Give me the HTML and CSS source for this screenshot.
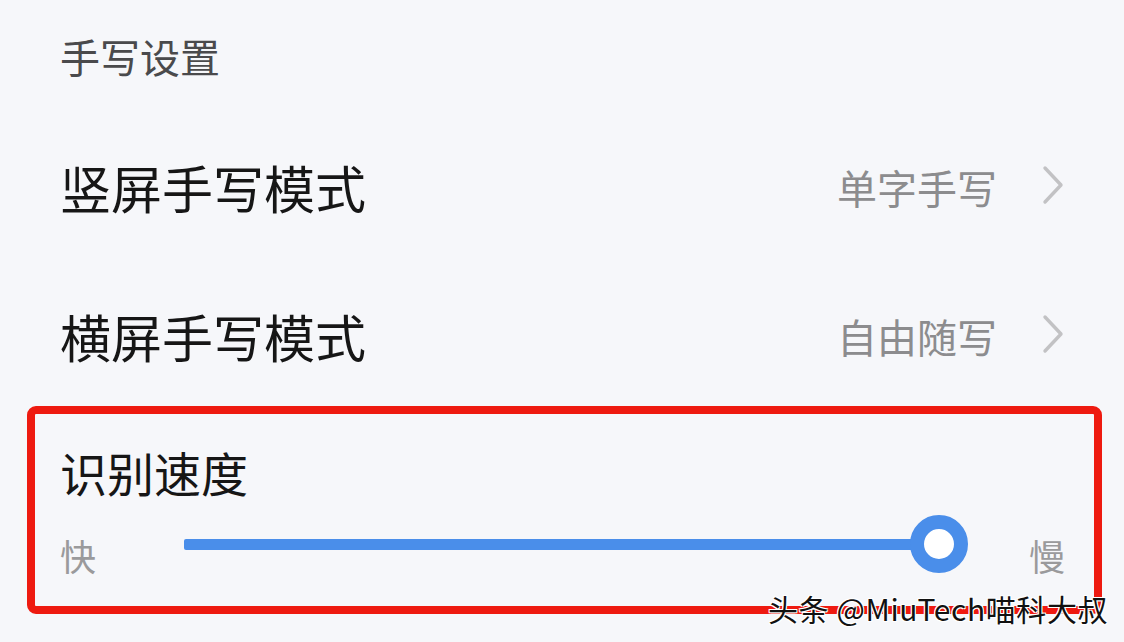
FILE: index.html
```html
<!DOCTYPE html>
<html lang="zh-CN">
<head>
<meta charset="utf-8">
<title>手写设置</title>
<link rel="stylesheet" href="styles.css">
</head>
<body>
<div class="page">
  <div class="section-title">手写设置</div>
  <div class="row row-first">
    <div class="row-label">竖屏手写模式</div>
    <div class="row-value">单字手写</div>
    <svg class="chevron" width="24" height="42" viewBox="0 0 24 42"><polyline points="4,4 20,21 4,38" fill="none" stroke="#c2c2c4" stroke-width="3.4" stroke-linecap="round" stroke-linejoin="round"/></svg>
  </div>
  <div class="row row-second">
    <div class="row-label">横屏手写模式</div>
    <div class="row-value">自由随写</div>
    <svg class="chevron" width="24" height="42" viewBox="0 0 24 42"><polyline points="4,4 20,21 4,38" fill="none" stroke="#c2c2c4" stroke-width="3.4" stroke-linecap="round" stroke-linejoin="round"/></svg>
  </div>
  <div class="speed-box">
    <div class="speed-title">识别速度</div>
    <div class="slider-row">
      <span class="slider-end">快</span>
      <div class="track">
        <div class="thumb"></div>
      </div>
      <span class="slider-end slow">慢</span>
    </div>
  </div>
  <div class="watermark">头条 @MiuTech喵科大叔</div>
</div>
</body>
</html>
```

FILE: styles.css
```css
html, body {
  margin: 0;
  padding: 0;
}
body {
  background: #f6f7fa;
  font-family: "Noto Sans CJK SC", "Noto Sans", sans-serif;
  width: 1124px;
  height: 642px;
  overflow: hidden;
}
.page {
  position: relative;
  width: 1124px;
  height: 642px;
}
.section-title {
  height: 115px;
  box-sizing: border-box;
  padding: 28px 0 0 60px;
  font-size: 40px;
  line-height: 56px;
  color: #4a4a4c;
}
.row {
  display: flex;
  align-items: center;
  box-sizing: border-box;
  padding: 0 59px 0 60px;
}
.row-first {
  height: 144px;
}
.row-second {
  height: 147px;
  padding-top: 6px;
}
.row-label {
  flex: 1;
  font-size: 51px;
  line-height: 64px;
  color: #161616;
}
.row-value {
  font-size: 40px;
  line-height: 56px;
  color: #8c8c8e;
  margin-right: 44px;
}
.chevron {
  display: block;
  margin-top: -4px;
}
.speed-box {
  margin: 0 22px 0 27px;
  height: 208px;
  box-sizing: border-box;
  border: 8px solid #ee1a10;
  border-radius: 9px;
  padding: 29px 29px 0 25px;
}
.speed-title {
  font-size: 47px;
  line-height: 58px;
  color: #161616;
}
.slider-row {
  display: flex;
  align-items: center;
  height: 86px;
}
.slider-end {
  width: 36px;
  font-size: 36px;
  line-height: 40px;
  color: #9a9a9c;
  margin-top: 22px;
}
.slow {
  margin-left: 90px;
}
.track {
  position: relative;
  flex: 1;
  height: 11px;
  margin-left: 88px;
  background: #4a8eea;
  border-radius: 2px;
}
.thumb {
  position: absolute;
  right: -29px;
  top: 50%;
  width: 58px;
  height: 58px;
  margin-top: -29px;
  box-sizing: border-box;
  border: 14px solid #4a8eea;
  border-radius: 50%;
  background: #ffffff;
}
.watermark {
  position: absolute;
  left: 768px;
  top: 588px;
  font-size: 30px;
  line-height: 40px;
  letter-spacing: 0.6px;
  color: #111111;
  white-space: nowrap;
  text-shadow: 1px 1px 0 #ffffff, -1px -1px 0 #ffffff, 1px -1px 0 #ffffff, -1px 1px 0 #ffffff;
}
```
